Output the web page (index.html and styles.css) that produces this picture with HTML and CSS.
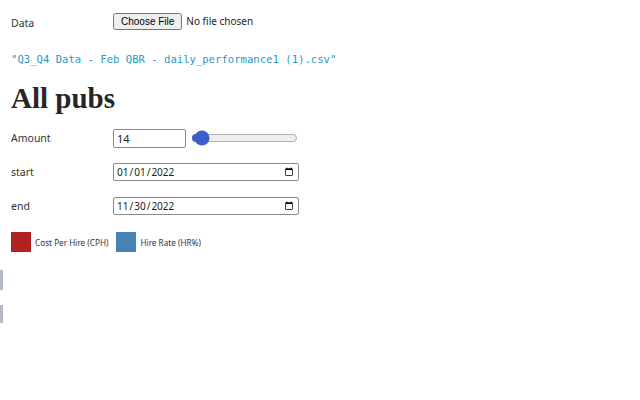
FILE: index.html
```html
<!DOCTYPE html>
<html>
<head>
<meta charset="utf-8">
<link rel="stylesheet" href="styles.css">
</head>
<body>
<div class="page">
  <form class="row first">
    <label class="lbl">Data</label>
    <input class="file" type="file">
  </form>
  <div class="cell string">"Q3_Q4 Data - Feb QBR - daily_performance1 (1).csv"</div>
  <h1 class="cell title">All pubs</h1>
  <form class="row amount">
    <label class="lbl">Amount</label>
    <input class="num" type="number" value="14">
    <input class="range" type="range" min="1" max="365" value="14">
  </form>
  <form class="row">
    <label class="lbl">start</label>
    <input class="date" type="date" value="2022-01-01">
  </form>
  <form class="row">
    <label class="lbl">end</label>
    <input class="date" type="date" value="2022-11-30">
  </form>
  <div class="legend">
    <span class="swatch"><span class="box red"></span>Cost Per Hire (CPH)</span>
    <span class="swatch"><span class="box blue"></span>Hire Rate (HR%)</span>
  </div>
  <div class="bar one"></div>
  <div class="bar two"></div>
</div>
</body>
</html>
```
FILE: styles.css
```css
html, body {
  margin: 0;
  padding: 0;
  background: #fff;
}
.page {
  padding-top: 13px;
  font-family: "Noto Sans", sans-serif;
  color: #333;
}
.cell, .row, .legend {
  margin-left: 11px;
}
.row {
  display: flex;
  align-items: center;
  height: 20px;
  margin-top: 14px;
  margin-bottom: 0;
  font-size: 10.5px;
}
.row.first {
  margin-top: 0;
  height: 19px;
}
.row.amount {
  margin-top: 13px;
}
.lbl {
  width: 102px;
  flex: none;
}
input {
  font-family: "Noto Sans", sans-serif;
  font-size: 11px;
  margin: 0;
  box-sizing: border-box;
  color: #222;
}
.file {
  height: 19px;
  font-size: 10px;
}
.num {
  width: 73px;
  height: 19px;
  padding: 0 3px;
  border: 1px solid #8a8a8a;
  border-radius: 2px;
}
.num::-webkit-inner-spin-button,
.num::-webkit-outer-spin-button {
  -webkit-appearance: none;
  margin: 0;
}
.range {
  width: 107px;
  margin-left: 5px;
  accent-color: #3a5fc8;
}
.date {
  width: 186px;
  height: 18px;
  padding: 0 2px;
  font-size: 10px;
  border: 1px solid #8a8a8a;
  border-radius: 2px;
}
.string {
  margin-top: 20px;
  font-family: "DejaVu Sans Mono", monospace;
  font-size: 10.6px;
  line-height: 14px;
  color: #2a98c8;
  white-space: pre;
}
.title {
  margin-top: 15px;
  margin-bottom: 0;
  font-family: "Liberation Serif", serif;
  font-weight: bold;
  font-size: 29px;
  line-height: 34px;
  color: #262626;
}
.legend {
  margin-top: 16px;
  display: flex;
  align-items: center;
  height: 20px;
  font-size: 8.2px;
  color: #333;
}
.swatch {
  display: inline-flex;
  align-items: center;
  margin-right: 8px;
}
.box {
  width: 20px;
  height: 20px;
  margin-right: 4px;
}
.red { background: #b22222; }
.blue { background: #4682b4; }
.bar {
  width: 3px;
  background: #b4b9c6;
}
.bar.one {
  margin-top: 18px;
  height: 20px;
}
.bar.two {
  margin-top: 15px;
  height: 18px;
}
```
